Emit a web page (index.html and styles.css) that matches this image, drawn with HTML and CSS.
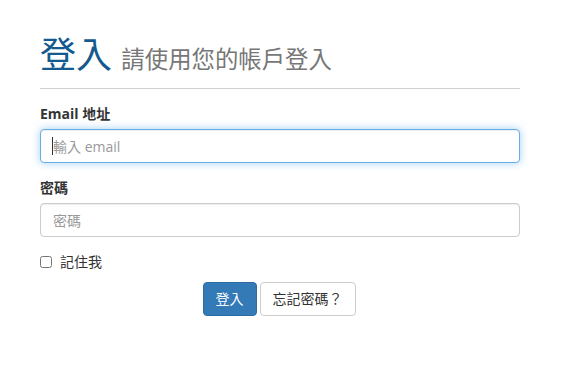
FILE: index.html
```html
<!DOCTYPE html>
<html lang="zh-Hant">
<head>
<meta charset="utf-8">
<title>登入</title>
<link rel="stylesheet" href="styles.css">
</head>
<body>
<div class="container">
  <div class="page-header">
    <h1 class="title">登入 <small class="subtitle">請使用您的帳戶登入</small></h1>
  </div>
  <form class="login-form">
    <div class="form-group">
      <label class="field-label" for="email">Email 地址</label>
      <div class="input-wrap">
        <input class="form-control is-focused" id="email" type="email" placeholder="輸入 email">
        <span class="caret-mark"></span>
      </div>
    </div>
    <div class="form-group">
      <label class="field-label" for="password">密碼</label>
      <input class="form-control" id="password" type="password" placeholder="密碼">
    </div>
    <div class="checkbox-row">
      <input class="check" id="remember" type="checkbox">
      <label class="check-label" for="remember">記住我</label>
    </div>
    <div class="actions">
      <button type="button" class="btn btn-primary">登入</button>
      <button type="button" class="btn btn-default">忘記密碼？</button>
    </div>
  </form>
</div>
</body>
</html>
```
FILE: styles.css
```css
* { box-sizing: border-box; }
html, body { margin: 0; padding: 0; background: #fff; }
body {
  font-family: "Open Sans", "Noto Sans CJK TC", sans-serif;
  font-size: 14px;
  line-height: 20px;
  color: #333;
}
.container {
  width: 480px;
  margin-left: 40px;
  padding-top: 35px;
}
.page-header {
  border-bottom: 1px solid #cfcfcf;
  padding-bottom: 9px;
  margin-bottom: 15px;
}
.title {
  margin: 0;
  font-size: 36px;
  line-height: 40px;
  font-weight: 400;
  color: #145a8e;
  font-family: "Open Sans", "Noto Sans CJK TC", sans-serif;
}
.subtitle {
  font-size: 23.4px;
  color: #777;
  font-weight: 400;
}
.form-group { margin-bottom: 15px; }
.field-label {
  display: block;
  font-weight: 700;
  margin-bottom: 5px;
  color: #333;
}
.input-wrap { position: relative; }
.form-control {
  display: block;
  width: 100%;
  height: 34px;
  padding: 6px 12px;
  font-family: "Open Sans", "Noto Sans CJK TC", sans-serif;
  font-size: 14px;
  line-height: 20px;
  color: #555;
  background: #fff;
  border: 1px solid #ccc;
  border-radius: 4px;
  box-shadow: inset 0 1px 1px rgba(0,0,0,.075);
  outline: none;
  caret-color: transparent;
}
.form-control::placeholder { color: #999; opacity: 1; }
.form-control.is-focused {
  border-color: #66afe9;
  box-shadow: inset 0 1px 1px rgba(0,0,0,.075), 0 0 8px rgba(102,175,233,.6);
}
.caret-mark {
  position: absolute;
  left: 12px;
  top: 8px;
  width: 1px;
  height: 18px;
  background: #333;
}
.checkbox-row {
  display: flex;
  align-items: center;
  height: 20px;
  margin-bottom: 10px;
}
.check {
  margin: 0 8px 0 0;
  width: 12px;
  height: 12px;
}
.check-label { font-weight: 400; color: #333; }
.actions {
  display: flex;
  justify-content: center;
  gap: 3px;
  padding-right: 2px;
}
.btn {
  height: 34px;
  padding: 6px 12px;
  font-family: "Open Sans", "Noto Sans CJK TC", sans-serif;
  font-size: 14px;
  line-height: 20px;
  border-radius: 4px;
  border: 1px solid transparent;
  cursor: pointer;
}
.btn-primary { background: #337ab7; border-color: #2e6da4; color: #fff; }
.btn-default { background: #fff; border-color: #ccc; color: #333; }
```
